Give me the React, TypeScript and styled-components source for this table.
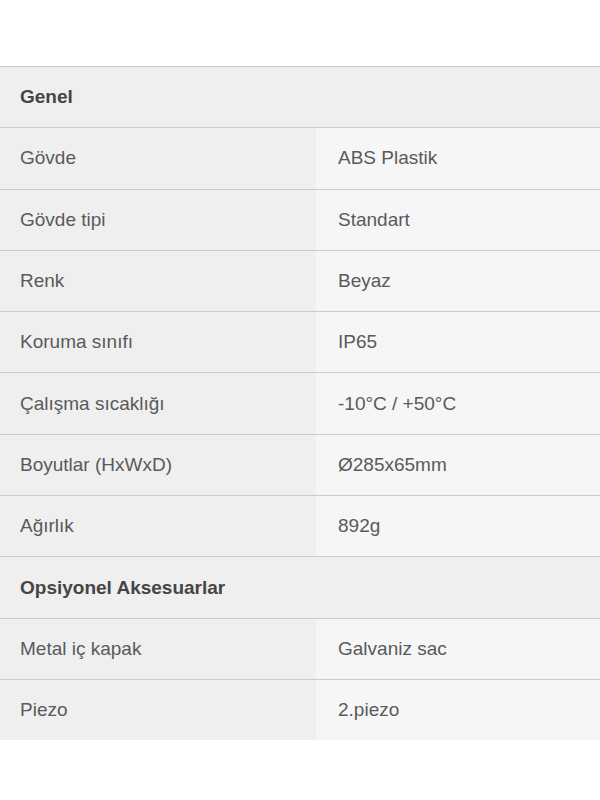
import React from 'react';
import styled, { createGlobalStyle } from 'styled-components';

const GlobalStyle = createGlobalStyle`
	html, body {
		margin: 0;
		padding: 0;
		background: #fff;
	}
	body {
		font-family: 'Liberation Sans', Arial, sans-serif;
	}
`;

const Page = styled.div`
	padding-top: 66px;
	width: 600px;
`;

const Table = styled.div`
	border-top: 1px solid #cbcbcb;
`;

const Row = styled.div<{ $last?: boolean }>`
	display: grid;
	grid-template-columns: 316px 1fr;
	height: 60.3px;
	border-bottom: ${(p) => (p.$last ? 'none' : '1px solid #cbcbcb')};
`;

const Cell = styled.div<{ $value?: boolean }>`
	display: flex;
	align-items: center;
	padding-left: ${(p) => (p.$value ? '22px' : '20px')};
	background-color: ${(p) => (p.$value ? '#f6f6f6' : '#efefef')};
	font-size: 19px;
	color: #5a5a5a;
`;

const HeaderRow = styled.div`
	display: flex;
	align-items: center;
	height: 60.3px;
	padding-left: 20px;
	background-color: #efefef;
	border-bottom: 1px solid #cbcbcb;
	font-size: 19px;
	font-weight: 700;
	color: #454545;
`;

type Item = { label: string; value: string };

const sections: { title: string; items: Item[] }[] = [
	{
		title: 'Genel',
		items: [
			{ label: 'Gövde', value: 'ABS Plastik' },
			{ label: 'Gövde tipi', value: 'Standart' },
			{ label: 'Renk', value: 'Beyaz' },
			{ label: 'Koruma sınıfı', value: 'IP65' },
			{ label: 'Çalışma sıcaklığı', value: '-10°C / +50°C' },
			{ label: 'Boyutlar (HxWxD)', value: 'Ø285x65mm' },
			{ label: 'Ağırlık', value: '892g' },
		],
	},
	{
		title: 'Opsiyonel Aksesuarlar',
		items: [
			{ label: 'Metal iç kapak', value: 'Galvaniz sac' },
			{ label: 'Piezo', value: '2.piezo' },
		],
	},
];

const App: React.FunctionComponent = () => {
	return (
		<>
			<GlobalStyle />
			<Page>
				<Table>
					{sections.map((section, si) => (
						<React.Fragment key={section.title}>
							<HeaderRow>{section.title}</HeaderRow>
							{section.items.map((item, ii) => (
								<Row
									key={item.label}
									$last={si === sections.length - 1 && ii === section.items.length - 1}
								>
									<Cell>{item.label}</Cell>
									<Cell $value>{item.value}</Cell>
								</Row>
							))}
						</React.Fragment>
					))}
				</Table>
			</Page>
		</>
	);
};

export default App;
